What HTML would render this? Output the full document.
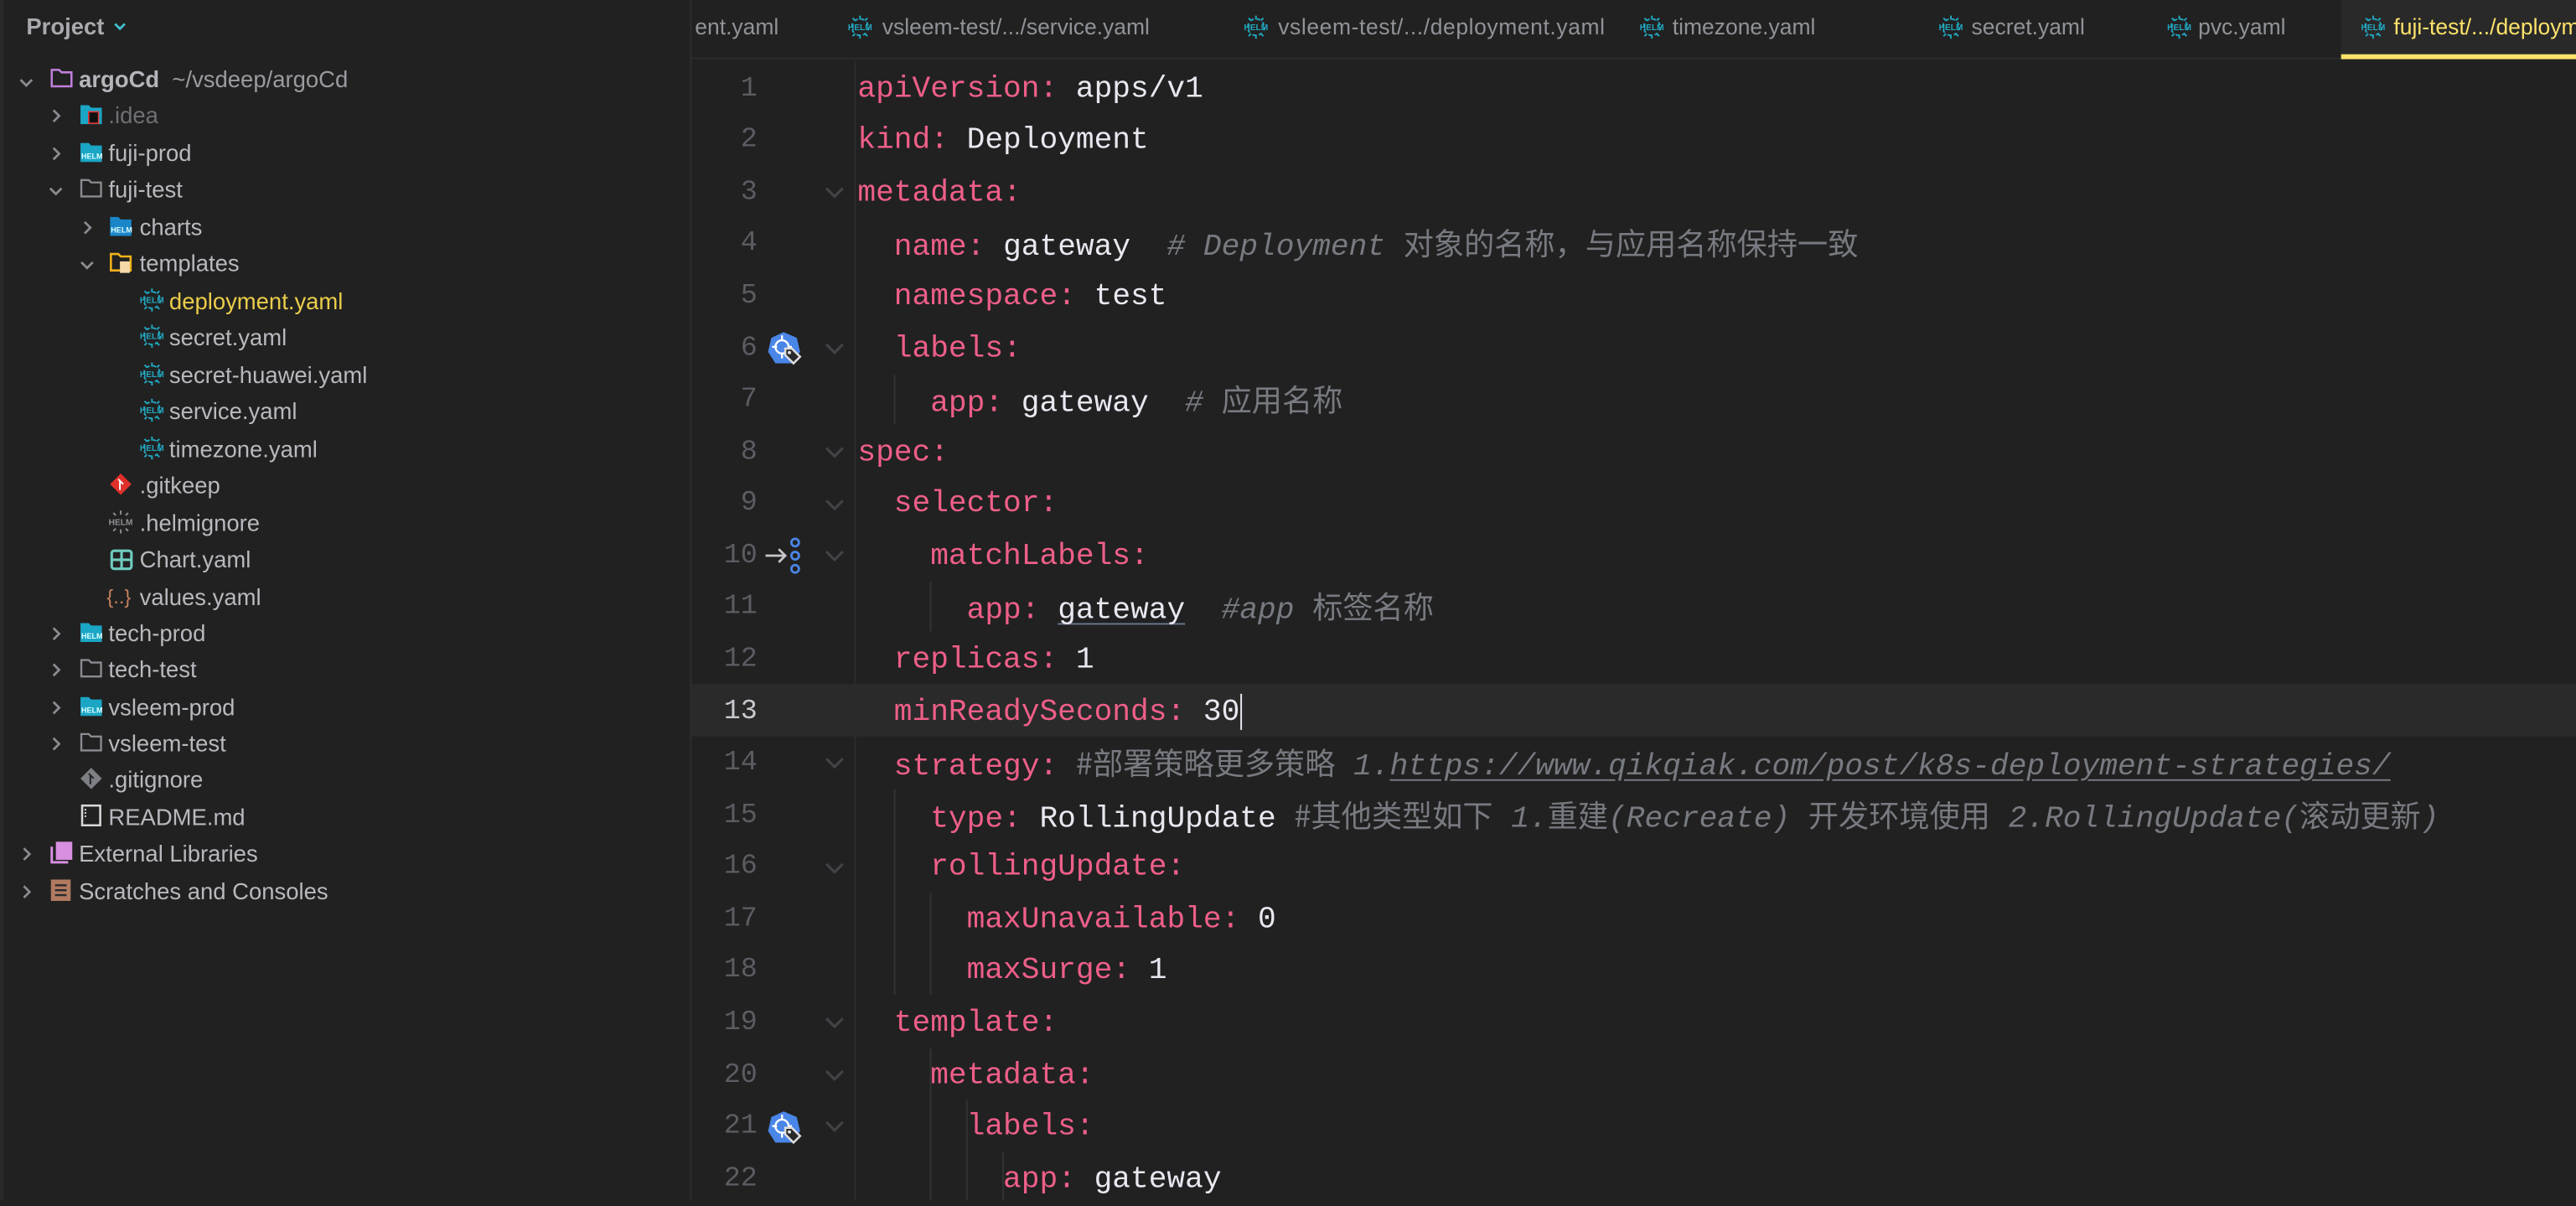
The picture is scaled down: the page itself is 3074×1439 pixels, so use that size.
<!DOCTYPE html>
<html><head><meta charset="utf-8">
<style>
*{margin:0;padding:0;box-sizing:border-box}
html,body{width:3074px;height:1432px;overflow:hidden;background:#212121}
#root{position:absolute;left:0;top:0;width:1568px;height:730px;transform:scale(1.96046,1.96164);transform-origin:0 0;background:#212121;font-family:"Liberation Sans","Noto Sans CJK SC",sans-serif}
.abs{position:absolute}
.side{left:0;top:0;width:421px;height:730px;background:#212121;border-right:1px solid #2e2e2e}
.side:before{content:"";position:absolute;left:0;top:0;width:2px;height:730px;background:#2a2a2a}
.row{position:absolute;height:22px;line-height:22px;font-size:14px;color:#b8b9be;white-space:nowrap}
.chev{position:absolute;width:14px;height:22px}
.ico{position:absolute;width:15px;height:15px}
.tabs{left:421px;top:0;width:1147px;height:36px;border-bottom:1px solid #2c2c2c}
.tab{position:absolute;top:0;height:36px;line-height:33px;font-size:13.5px;color:#909398;white-space:nowrap}
.ln{position:absolute;left:421px;width:40px;text-align:right;font-family:"Liberation Mono",monospace;font-size:17px;color:#5b5d62;height:31.57px;line-height:31.57px;margin-top:1.6px}
.code{position:absolute;left:522px;font-family:"Liberation Mono","Noto Sans CJK SC",monospace;font-size:18.47px;height:31.57px;line-height:31.57px;white-space:pre;color:#e9e7f0;margin-top:1.6px}
.k{color:#ee5f88}
.c{color:#777a80;font-style:italic}
.cj{font-style:normal;font-family:"Noto Sans CJK SC",sans-serif}
.fold{position:absolute;left:501px;width:14px;height:14px}
</style></head><body><div id="root">

<div class="abs side"></div>
<div class="row" style="left:16px;top:5px;font-weight:bold;font-size:14px;color:#a9a9ae">Project</div>
<svg class="abs" style="left:68px;top:11px" width="10" height="10" viewBox="0 0 10 10"><path d="M2 3.5 L5 6.5 L8 3.5" stroke="#3fc4d6" stroke-width="1.4" fill="none"/></svg>

<svg width="0" height="0" style="position:absolute">
<defs>
<g id="cd"><path d="M3.5 7.5 L7 11 L10.5 7.5" stroke="#8a8c91" stroke-width="1.4" fill="none"/></g>
<g id="cr"><path d="M5.5 5 L9 8.5 L5.5 12" stroke="#8a8c91" stroke-width="1.4" fill="none"/></g>
<g id="helm"><circle cx="7.5" cy="7.5" r="5" fill="none" stroke="#22a7c0" stroke-width="1" stroke-dasharray="2 2"/><path d="M7.5 0.5V3M7.5 12V14.5M3 2L4.5 3.5M12 2L10.5 3.5M3 13L4.5 11.5M12 13L10.5 11.5" stroke="#22a7c0" stroke-width="1"/><text x="7.5" y="9.3" font-size="5.2" font-family="Liberation Sans" font-weight="bold" fill="#22a7c0" text-anchor="middle">HELM</text></g>
<g id="helmg"><path d="M7.5 0.5V3M7.5 12V14.5M3 2L4.5 3.5M12 2L10.5 3.5M3 13L4.5 11.5M12 13L10.5 11.5" stroke="#8e9095" stroke-width="1"/><text x="7.5" y="9.3" font-size="5.2" font-family="Liberation Sans" font-weight="bold" fill="#8e9095" text-anchor="middle">HELM</text></g>
<g id="fold"><path d="M1.5 2.5h4.5l1.5 1.5h6v8.5h-12z" fill="none" stroke="#8a8c91" stroke-width="1.2"/></g>
<g id="hfold"><path d="M1 2h5l1.5 1.5H14v10H1z" fill="#1ba6c5"/><text x="8" y="11.5" font-size="4.6" font-family="Liberation Sans" font-weight="bold" fill="#dff" text-anchor="middle">HELM</text></g>
</defs></svg>

<svg class="chev" style="left:9px;top:37px" viewBox="0 0 14 22"><use href="#cd" y="4"/></svg>
<svg class="ico" style="left:30px;top:40px" viewBox="0 0 15 15"><path d="M1.5 2.5h4.5l1.5 1.5h6v8.5h-12z" fill="none" stroke="#c07fdc" stroke-width="1.3"/></svg>
<div class="row" style="left:48px;top:37px"><b style="color:#b4b5ba">argoCd</b>&nbsp; <span style="color:#9a9ba0">~/vsdeep/argoCd</span></div>

<svg class="chev" style="left:27px;top:59px" viewBox="0 0 14 22"><use href="#cr" y="3"/></svg>
<svg class="ico" style="left:48px;top:62px" viewBox="0 0 15 15"><path d="M1 2h5l1.5 1.5H14v10H1z" fill="#1ba6c5"/><rect x="6" y="6" width="6" height="7" fill="#111" stroke="#e33" stroke-width="0.8"/></svg>
<div class="row" style="left:66px;top:59px;color:#6e7075">.idea</div>

<svg class="chev" style="left:27px;top:82px" viewBox="0 0 14 22"><use href="#cr" y="3"/></svg>
<svg class="ico" style="left:48px;top:85px" viewBox="0 0 15 15"><use href="#hfold"/></svg>
<div class="row" style="left:66px;top:82px">fuji-prod</div>

<svg class="chev" style="left:27px;top:104px" viewBox="0 0 14 22"><use href="#cd" y="3"/></svg>
<svg class="ico" style="left:48px;top:107px" viewBox="0 0 15 15"><use href="#fold"/></svg>
<div class="row" style="left:66px;top:104px">fuji-test</div>

<svg class="chev" style="left:46px;top:127px" viewBox="0 0 14 22"><use href="#cr" y="3"/></svg>
<svg class="ico" style="left:66px;top:130px" viewBox="0 0 15 15"><path d="M1 2h5l1.5 1.5H14v10H1z" fill="#1a86c9"/><text x="8" y="11.5" font-size="4.6" font-family="Liberation Sans" font-weight="bold" fill="#dff" text-anchor="middle">HELM</text></svg>
<div class="row" style="left:85px;top:127px">charts</div>

<svg class="chev" style="left:46px;top:149px" viewBox="0 0 14 22"><use href="#cd" y="3"/></svg>
<svg class="ico" style="left:66px;top:152px" viewBox="0 0 15 15"><path d="M1.5 2.5h4.5l1.5 1.5h6v8.5h-12z" fill="none" stroke="#f2b21a" stroke-width="1.3"/><rect x="7" y="7" width="6" height="7" fill="#f5d9a8"/></svg>
<div class="row" style="left:85px;top:149px">templates</div>

<svg class="ico" style="left:85px;top:175px" viewBox="0 0 15 15"><use href="#helm"/></svg>
<div class="row" style="left:103px;top:172px;color:#eacd4a">deployment.yaml</div>
<svg class="ico" style="left:85px;top:197px" viewBox="0 0 15 15"><use href="#helm"/></svg>
<div class="row" style="left:103px;top:194px">secret.yaml</div>
<svg class="ico" style="left:85px;top:220px" viewBox="0 0 15 15"><use href="#helm"/></svg>
<div class="row" style="left:103px;top:217px">secret-huawei.yaml</div>
<svg class="ico" style="left:85px;top:242px" viewBox="0 0 15 15"><use href="#helm"/></svg>
<div class="row" style="left:103px;top:239px">service.yaml</div>
<svg class="ico" style="left:85px;top:265px" viewBox="0 0 15 15"><use href="#helm"/></svg>
<div class="row" style="left:103px;top:262px">timezone.yaml</div>

<svg class="ico" style="left:66px;top:287px" viewBox="0 0 15 15"><path d="M7.5 1 L14 7.5 L7.5 14 L1 7.5Z" fill="#e0302a"/><path d="M6 4.5 L9 7.5 M7 5.5V11" stroke="#fff" stroke-width="1"/></svg>
<div class="row" style="left:85px;top:284px">.gitkeep</div>
<svg class="ico" style="left:66px;top:310px" viewBox="0 0 15 15"><use href="#helmg"/></svg>
<div class="row" style="left:85px;top:307px">.helmignore</div>
<svg class="ico" style="left:67px;top:333px" viewBox="0 0 15 15"><rect x="1" y="2" width="12" height="11" rx="1.5" fill="none" stroke="#6fcbbf" stroke-width="1.6"/><path d="M1 7.5H13M7 2V13" stroke="#6fcbbf" stroke-width="1.6"/></svg>
<div class="row" style="left:85px;top:329px">Chart.yaml</div>
<div class="row" style="left:65px;top:352px;color:#c5835f;font-size:12px">{..}</div>
<div class="row" style="left:85px;top:352px">values.yaml</div>

<svg class="chev" style="left:27px;top:374px" viewBox="0 0 14 22"><use href="#cr" y="3"/></svg>
<svg class="ico" style="left:48px;top:377px" viewBox="0 0 15 15"><use href="#hfold"/></svg>
<div class="row" style="left:66px;top:374px">tech-prod</div>
<svg class="chev" style="left:27px;top:396px" viewBox="0 0 14 22"><use href="#cr" y="3"/></svg>
<svg class="ico" style="left:48px;top:399px" viewBox="0 0 15 15"><use href="#fold"/></svg>
<div class="row" style="left:66px;top:396px">tech-test</div>
<svg class="chev" style="left:27px;top:419px" viewBox="0 0 14 22"><use href="#cr" y="3"/></svg>
<svg class="ico" style="left:48px;top:422px" viewBox="0 0 15 15"><use href="#hfold"/></svg>
<div class="row" style="left:66px;top:419px">vsleem-prod</div>
<svg class="chev" style="left:27px;top:441px" viewBox="0 0 14 22"><use href="#cr" y="3"/></svg>
<svg class="ico" style="left:48px;top:444px" viewBox="0 0 15 15"><use href="#fold"/></svg>
<div class="row" style="left:66px;top:441px">vsleem-test</div>
<svg class="ico" style="left:48px;top:466px" viewBox="0 0 15 15"><path d="M7.5 1 L14 7.5 L7.5 14 L1 7.5Z" fill="#7d7f84"/><path d="M6 4.5 L9 7.5 M7 5.5V11" stroke="#222" stroke-width="1"/></svg>
<div class="row" style="left:66px;top:463px">.gitignore</div>
<svg class="ico" style="left:48px;top:489px" viewBox="0 0 15 15"><rect x="2" y="1" width="11" height="12" fill="none" stroke="#d8d8dc" stroke-width="1.3"/><path d="M4 3v5" stroke="#d8d8dc" stroke-dasharray="1 1"/></svg>
<div class="row" style="left:66px;top:486px">README.md</div>

<svg class="chev" style="left:9px;top:508px" viewBox="0 0 14 22"><use href="#cr" y="3"/></svg>
<svg class="ico" style="left:30px;top:511px" viewBox="0 0 15 15"><rect x="4" y="1" width="10" height="11" fill="#d88fe0"/><path d="M1.5 4v9.5h10" stroke="#d88fe0" stroke-width="1.5" fill="none"/></svg>
<div class="row" style="left:48px;top:508px">External Libraries</div>
<svg class="chev" style="left:9px;top:531px" viewBox="0 0 14 22"><use href="#cr" y="3"/></svg>
<svg class="ico" style="left:30px;top:534px" viewBox="0 0 15 15"><rect x="1" y="1" width="12" height="13" fill="#b07a60"/><path d="M3.5 4.5h7M3.5 7.5h7M3.5 10.5h7" stroke="#2b2b2b" stroke-width="1.2"/></svg>
<div class="row" style="left:48px;top:531px">Scratches and Consoles</div>

<div class="abs tabs"></div>
<div class="abs" style="left:1425px;top:0;width:143px;height:36px;background:#292929"></div>
<div class="abs" style="left:1425px;top:33px;width:143px;height:3px;background:#fde26a"></div>
<div class="tab" style="left:423px">ent.yaml</div>
<svg class="ico" style="left:516px;top:9px" viewBox="0 0 15 15"><use href="#helm"/></svg>
<div class="tab" style="left:537px">vsleem-test/.../service.yaml</div>
<svg class="ico" style="left:757px;top:9px" viewBox="0 0 15 15"><use href="#helm"/></svg>
<div class="tab" style="left:778px;letter-spacing:0.3px">vsleem-test/.../deployment.yaml</div>
<svg class="ico" style="left:998px;top:9px" viewBox="0 0 15 15"><use href="#helm"/></svg>
<div class="tab" style="left:1018px">timezone.yaml</div>
<svg class="ico" style="left:1180px;top:9px" viewBox="0 0 15 15"><use href="#helm"/></svg>
<div class="tab" style="left:1200px">secret.yaml</div>
<svg class="ico" style="left:1319px;top:9px" viewBox="0 0 15 15"><use href="#helm"/></svg>
<div class="tab" style="left:1338px">pvc.yaml</div>
<svg class="ico" style="left:1437px;top:9px" viewBox="0 0 15 15"><use href="#helm"/></svg>
<div class="tab" style="left:1457px;color:#fde26a">fuji-test/.../deployment.yaml</div>

<div class="abs" style="left:520px;top:37px;width:1px;height:693px;background:#2c2c2c"></div>
<div class="abs" style="left:421px;top:416px;width:1147px;height:32px;background:#2a2a2a"></div>

<div class="ln" style="top:37.2px">1</div><div class="ln" style="top:68.8px">2</div><div class="ln" style="top:100.4px">3</div><div class="ln" style="top:131.9px">4</div><div class="ln" style="top:163.5px">5</div><div class="ln" style="top:195.1px">6</div><div class="ln" style="top:226.6px">7</div><div class="ln" style="top:258.2px">8</div><div class="ln" style="top:289.8px">9</div><div class="ln" style="top:321.3px">10</div><div class="ln" style="top:352.9px">11</div><div class="ln" style="top:384.5px">12</div><div class="ln" style="top:416.1px;color:#c9cacf">13</div><div class="ln" style="top:447.6px">14</div><div class="ln" style="top:479.2px">15</div><div class="ln" style="top:510.8px">16</div><div class="ln" style="top:542.3px">17</div><div class="ln" style="top:573.9px">18</div><div class="ln" style="top:605.5px">19</div><div class="ln" style="top:637px">20</div><div class="ln" style="top:668.6px">21</div><div class="ln" style="top:700.2px">22</div>

<svg class="fold" style="top:110px" viewBox="0 0 14 14"><path d="M2 4.5L7 9.5L12 4.5" stroke="#414347" stroke-width="1.6" fill="none"/></svg>
<svg class="fold" style="top:205px" viewBox="0 0 14 14"><path d="M2 4.5L7 9.5L12 4.5" stroke="#414347" stroke-width="1.6" fill="none"/></svg>
<svg class="fold" style="top:268px" viewBox="0 0 14 14"><path d="M2 4.5L7 9.5L12 4.5" stroke="#414347" stroke-width="1.6" fill="none"/></svg>
<svg class="fold" style="top:300px" viewBox="0 0 14 14"><path d="M2 4.5L7 9.5L12 4.5" stroke="#414347" stroke-width="1.6" fill="none"/></svg>
<svg class="fold" style="top:331px" viewBox="0 0 14 14"><path d="M2 4.5L7 9.5L12 4.5" stroke="#414347" stroke-width="1.6" fill="none"/></svg>
<svg class="fold" style="top:457px" viewBox="0 0 14 14"><path d="M2 4.5L7 9.5L12 4.5" stroke="#414347" stroke-width="1.6" fill="none"/></svg>
<svg class="fold" style="top:521px" viewBox="0 0 14 14"><path d="M2 4.5L7 9.5L12 4.5" stroke="#414347" stroke-width="1.6" fill="none"/></svg>
<svg class="fold" style="top:615px" viewBox="0 0 14 14"><path d="M2 4.5L7 9.5L12 4.5" stroke="#414347" stroke-width="1.6" fill="none"/></svg>
<svg class="fold" style="top:647px" viewBox="0 0 14 14"><path d="M2 4.5L7 9.5L12 4.5" stroke="#414347" stroke-width="1.6" fill="none"/></svg>
<svg class="fold" style="top:678px" viewBox="0 0 14 14"><path d="M2 4.5L7 9.5L12 4.5" stroke="#414347" stroke-width="1.6" fill="none"/></svg>

<svg class="abs" style="left:467px;top:201px" width="22" height="22" viewBox="0 0 22 22"><path d="M10 1L18 4.5L20 13L15 20H5L0.5 13L2.5 4.5Z" fill="#4a86e8"/><circle cx="9" cy="10" r="4" fill="none" stroke="#fff" stroke-width="1.2"/><path d="M9 3v3M9 14v3M3 10h3M13 10h2" stroke="#fff" stroke-width="1.2"/><path d="M11 11l4 0 5 5-4 4-5-5z" fill="#2a2a2a" stroke="#ddd" stroke-width="1.3"/><circle cx="13.5" cy="13.5" r="1" fill="#ddd"/></svg>
<svg class="abs" style="left:467px;top:675px" width="22" height="22" viewBox="0 0 22 22"><path d="M10 1L18 4.5L20 13L15 20H5L0.5 13L2.5 4.5Z" fill="#4a86e8"/><circle cx="9" cy="10" r="4" fill="none" stroke="#fff" stroke-width="1.2"/><path d="M9 3v3M9 14v3M3 10h3M13 10h2" stroke="#fff" stroke-width="1.2"/><path d="M11 11l4 0 5 5-4 4-5-5z" fill="#2a2a2a" stroke="#ddd" stroke-width="1.3"/><circle cx="13.5" cy="13.5" r="1" fill="#ddd"/></svg>
<svg class="abs" style="left:465px;top:326px" width="26" height="24" viewBox="0 0 26 24"><path d="M1 12H13M9 8L13 12L9 16" stroke="#c8c8cc" stroke-width="1.4" fill="none"/><circle cx="19" cy="4" r="2.3" fill="none" stroke="#4a86e8" stroke-width="1.4"/><circle cx="19" cy="12" r="2.3" fill="none" stroke="#4a86e8" stroke-width="1.4"/><circle cx="19" cy="20" r="2.3" fill="none" stroke="#4a86e8" stroke-width="1.4"/></svg>

<div class="abs" style="left:544px;top:228px;width:1px;height:30px;background:#333"></div>
<div class="abs" style="left:566px;top:354px;width:1px;height:30px;background:#333"></div>
<div class="abs" style="left:544px;top:480px;width:1px;height:125px;background:#333"></div>
<div class="abs" style="left:566px;top:543px;width:1px;height:62px;background:#333"></div>
<div class="abs" style="left:566px;top:638px;width:1px;height:92px;background:#333"></div>
<div class="abs" style="left:588px;top:669px;width:1px;height:61px;background:#333"></div>
<div class="abs" style="left:610px;top:701px;width:1px;height:29px;background:#333"></div>

<div class="code" style="top:37.2px"><span class="k">apiVersion:</span> apps/v1</div>
<div class="code" style="top:68.8px"><span class="k">kind:</span> Deployment</div>
<div class="code" style="top:100.4px"><span class="k">metadata:</span></div>
<div class="code" style="top:131.9px">  <span class="k">name:</span> gateway  <span class="c"># Deployment <span class="cj">对象的名称，与应用名称保持一致</span></span></div>
<div class="code" style="top:163.5px">  <span class="k">namespace:</span> test</div>
<div class="code" style="top:195.1px">  <span class="k">labels:</span></div>
<div class="code" style="top:226.6px">    <span class="k">app:</span> gateway  <span class="c"># <span class="cj">应用名称</span></span></div>
<div class="code" style="top:258.2px"><span class="k">spec:</span></div>
<div class="code" style="top:289.8px">  <span class="k">selector:</span></div>
<div class="code" style="top:321.3px">    <span class="k">matchLabels:</span></div>
<div class="code" style="top:352.9px">      <span class="k">app:</span> <span style="text-decoration:underline;text-decoration-color:#6a7590;text-underline-offset:3px">gateway</span>  <span class="c">#app <span class="cj">标签名称</span></span></div>
<div class="code" style="top:384.5px">  <span class="k">replicas:</span> 1</div>
<div class="code" style="top:416.1px">  <span class="k">minReadySeconds:</span> 30<span style="display:inline-block;width:1.5px;height:22px;background:#e9e7f0;vertical-align:middle"></span></div>
<div class="code" style="top:447.6px">  <span class="k">strategy:</span> <span class="c"><span class="cj">#部署策略更多策略</span> 1.<span style="text-decoration:underline;text-underline-offset:3px">https://www.qikqiak.com/post/k8s-deployment-strategies/</span></span></div>
<div class="code" style="top:479.2px">    <span class="k">type:</span> RollingUpdate <span class="c"><span class="cj">#其他类型如下</span> 1.<span class="cj">重建</span>(Recreate) <span class="cj">开发环境使用</span> 2.RollingUpdate(<span class="cj">滚动更新</span>)</span></div>
<div class="code" style="top:510.8px">    <span class="k">rollingUpdate:</span></div>
<div class="code" style="top:542.3px">      <span class="k">maxUnavailable:</span> 0</div>
<div class="code" style="top:573.9px">      <span class="k">maxSurge:</span> 1</div>
<div class="code" style="top:605.5px">  <span class="k">template:</span></div>
<div class="code" style="top:637px">    <span class="k">metadata:</span></div>
<div class="code" style="top:668.6px">      <span class="k">labels:</span></div>
<div class="code" style="top:700.2px">        <span class="k">app:</span> gateway</div>

</div></body></html>
